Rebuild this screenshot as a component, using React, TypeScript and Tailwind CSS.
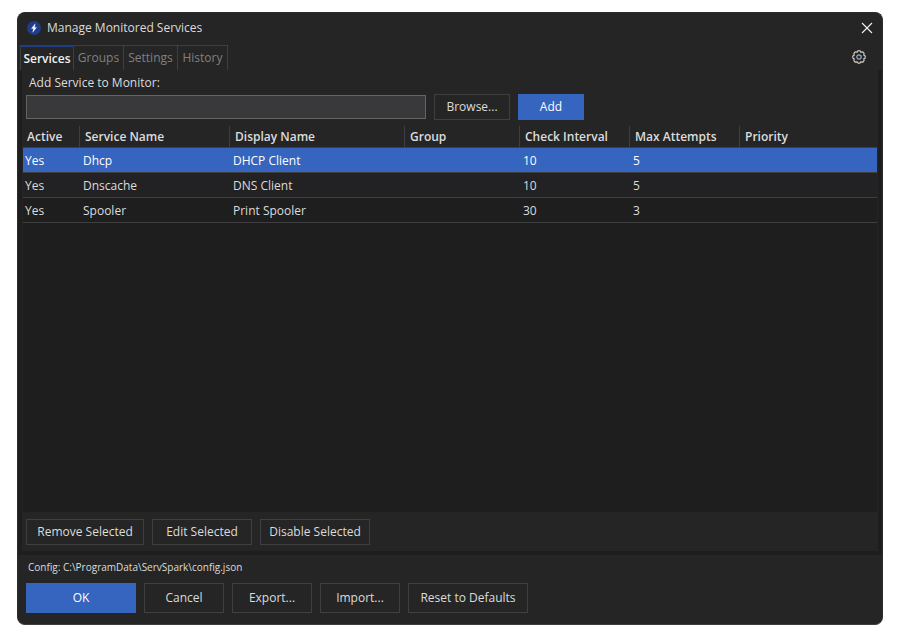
import { useState } from 'react';

const tabs = [
  { name: 'Services', width: 'w-[54px]' },
  { name: 'Groups', width: 'w-[50px]' },
  { name: 'Settings', width: 'w-[54px]' },
  { name: 'History', width: 'w-[50px]' },
];

const columns = [
  { title: 'Active', width: 'w-[56px]' },
  { title: 'Service Name', width: 'w-[150px]' },
  { title: 'Display Name', width: 'w-[175px]' },
  { title: 'Group', width: 'w-[115px]' },
  { title: 'Check Interval', width: 'w-[110px]' },
  { title: 'Max Attempts', width: 'w-[110px]' },
  { title: 'Priority', width: '' },
];

const services = [
  { active: 'Yes', name: 'Dhcp', display: 'DHCP Client', group: '', interval: 10, attempts: 5, priority: '' },
  { active: 'Yes', name: 'Dnscache', display: 'DNS Client', group: '', interval: 10, attempts: 5, priority: '' },
  { active: 'Yes', name: 'Spooler', display: 'Print Spooler', group: '', interval: 30, attempts: 3, priority: '' },
];

const Button = ({ label, size, primary = false }: { label: string; size: string; primary?: boolean }) => (
  <button
    type="button"
    className={`shrink-0 border ${size} ${primary ? 'border-[#3565bf] bg-[#3565bf] text-white' : 'border-[#3f3f42] bg-[#252525] text-[#dcdcdc] hover:bg-[#2f2f2f]'}`}
  >
    {label}
  </button>
);

const AppIcon = () => (
  <svg viewBox="0 0 16 16" className="size-4" aria-hidden="true">
    <circle cx="8" cy="8" r="7" fill="#1f3c88" />
    <path d="M9.2 3.8 5.4 8.5h2.1l-.8 3.8 3.9-4.9H8.5z" fill="#fff" stroke="#fff" strokeWidth="0.3" />
  </svg>
);

const GearIcon = () => (
  <svg viewBox="0 0 16 16" className="size-4" fill="none" strokeWidth="1.2" strokeLinejoin="round" aria-hidden="true">
    <path
      stroke="#d0c8c0"
      d="M12.71 6.05a1.98 1.98 0 0 1 0 3.9a1.98 1.98 0 0 1-2.76 2.76a1.98 1.98 0 0 1-3.9 0a1.98 1.98 0 0 1-2.76-2.76a1.98 1.98 0 0 1 0-3.9a1.98 1.98 0 0 1 2.76-2.76a1.98 1.98 0 0 1 3.9 0a1.98 1.98 0 0 1 2.76 2.76z"
    />
    <circle cx="8" cy="8" r="2.2" stroke="#8fb0cc" />
  </svg>
);

export default function App() {
  const [tab, setTab] = useState('Services');
  const [selected, setSelected] = useState('Dhcp');

  return (
    <div className="flex min-h-screen bg-white px-[17px] py-3 font-['Open_Sans','Noto_Sans',sans-serif] text-[12px] leading-4 text-[#dcdcdc]">
      <div className="flex min-w-0 flex-1 flex-col overflow-hidden rounded-lg border border-[#2b2b2b] border-b-[#3f3d40] bg-[#252525]">
        <header className="flex h-8 items-center gap-1 pr-[7px] pb-[3px] pl-2">
          <AppIcon />
          <h1 className="ml-px flex-1">Manage Monitored Services</h1>
          <button type="button" aria-label="Close" className="flex size-4 items-center justify-center">
            <svg viewBox="0 0 12 12" className="size-3" stroke="#f0f0f0" strokeWidth="1.1" aria-hidden="true">
              <path d="M1 1l10 10M11 1 1 11" />
            </svg>
          </button>
        </header>

        <div className="flex h-[25px] items-start justify-between pr-[15px] pl-0.5">
          <div role="tablist" className="flex h-full">
            {tabs.map((t) => (
              <button
                key={t.name}
                type="button"
                role="tab"
                aria-selected={tab === t.name}
                onClick={() => setTab(t.name)}
                className={`border-r border-[#3f3f42] ${t.width} ${tab === t.name ? 'border-t-2 border-l border-t-[#1f3c88] font-semibold text-[#f0f0f0]' : 'border-t text-[#808080]'}`}
              >
                {t.name}
              </button>
            ))}
          </div>
          <button type="button" aria-label="Options" className="pt-1">
            <GearIcon />
          </button>
        </div>

        <main className="flex flex-1 flex-col bg-[#1e1e1e] px-1 pb-1">
          <div className="flex flex-1 flex-col bg-[#252525] px-px">
            <div className="px-[3px] pt-[3px]">
              <label htmlFor="service" className="block pb-px pl-[3px] leading-5">
                Add Service to Monitor:
              </label>
              <div className="flex items-center gap-2 pb-1.5">
                <input
                  id="service"
                  type="text"
                  className="h-6 w-[400px] min-w-0 border border-[#646464] bg-[#39393b] px-1 outline-none"
                />
                <Button label="Browse..." size="h-[26px] w-[76px]" />
                <Button label="Add" size="h-[26px] w-[66px]" primary />
              </div>
            </div>

            <div className="flex-1 bg-[#1e1e1e]">
              <table className="w-full table-fixed border-separate border-spacing-0 text-left">
                <thead>
                  <tr className="h-[22px] bg-[#252525]">
                    {columns.map((c) => (
                      <th key={c.title} className={`border-b border-l border-[#3f3f42] p-0 pl-[5px] font-semibold first:border-l-0 first:pl-1 ${c.width}`}>
                        {c.title}
                      </th>
                    ))}
                  </tr>
                </thead>
                <tbody>
                  {services.map((s) => (
                    <tr
                      key={s.name}
                      onClick={() => setSelected(s.name)}
                      className={`h-[25px] *:border-b *:border-[#3f3f42] *:p-0 *:pt-0.5 *:pl-1 *:first:pl-0.5 ${selected === s.name ? 'bg-[#3565bf] text-white' : 'even:bg-[#222224]'}`}
                    >
                      <td>{s.active}</td>
                      <td>{s.name}</td>
                      <td>{s.display}</td>
                      <td>{s.group}</td>
                      <td>{s.interval}</td>
                      <td>{s.attempts}</td>
                      <td>{s.priority}</td>
                    </tr>
                  ))}
                </tbody>
              </table>
            </div>

            <div className="flex gap-2 px-[3px] pt-[7px] pb-1.5">
              <Button label="Remove Selected" size="h-[26px] w-[118px]" />
              <Button label="Edit Selected" size="h-[26px] w-[100px]" />
              <Button label="Disable Selected" size="h-[26px] w-[110px]" />
            </div>
          </div>
        </main>

        <footer className="px-2 pt-0.5 pb-[11px]">
          <p className="pb-1.5 pl-0.5 text-[10px] leading-5">Config: C:\ProgramData\ServSpark\config.json</p>
          <div className="flex gap-2">
            <Button label="OK" size="h-[30px] w-[110px]" primary />
            <Button label="Cancel" size="h-[30px] w-20" />
            <Button label="Export..." size="h-[30px] w-20" />
            <Button label="Import..." size="h-[30px] w-20" />
            <Button label="Reset to Defaults" size="h-[30px] w-[120px]" />
          </div>
        </footer>
      </div>
    </div>
  );
}
